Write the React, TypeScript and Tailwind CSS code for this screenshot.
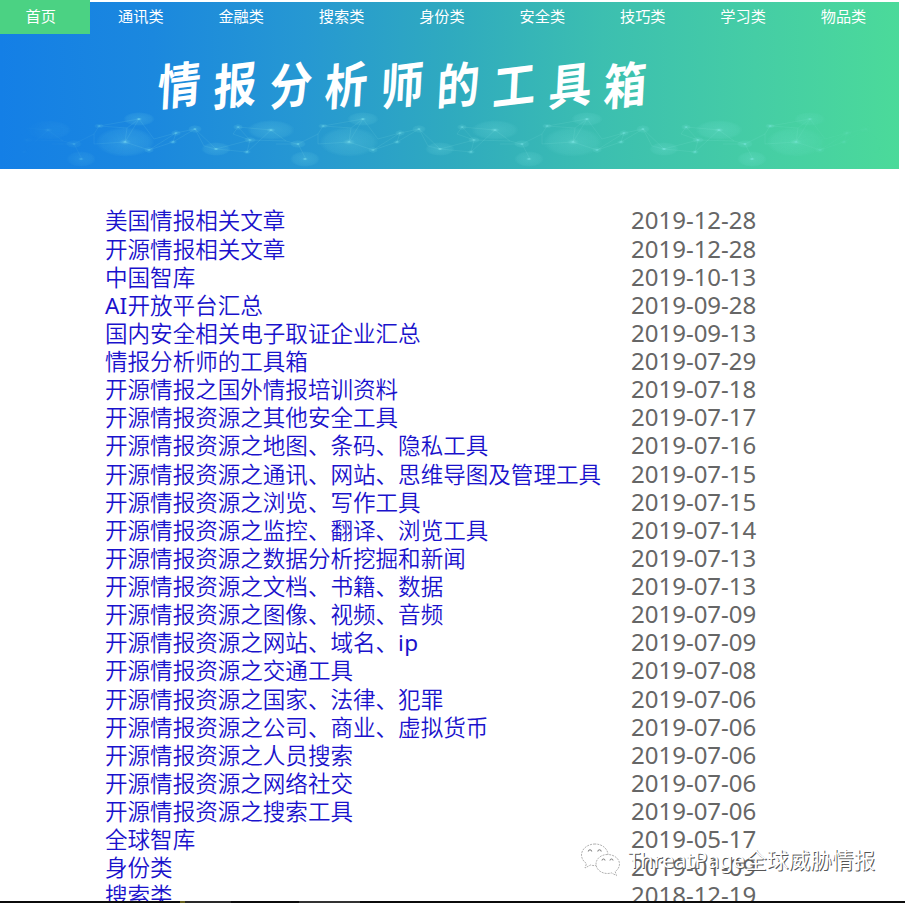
import React from 'react';

const navItems = ['通讯类', '金融类', '搜索类', '身份类', '安全类', '技巧类', '学习类', '物品类'];

const articles: [string, string][] = [
  ['美国情报相关文章', '2019-12-28'],
  ['开源情报相关文章', '2019-12-28'],
  ['中国智库', '2019-10-13'],
  ['AI开放平台汇总', '2019-09-28'],
  ['国内安全相关电子取证企业汇总', '2019-09-13'],
  ['情报分析师的工具箱', '2019-07-29'],
  ['开源情报之国外情报培训资料', '2019-07-18'],
  ['开源情报资源之其他安全工具', '2019-07-17'],
  ['开源情报资源之地图、条码、隐私工具', '2019-07-16'],
  ['开源情报资源之通讯、网站、思维导图及管理工具', '2019-07-15'],
  ['开源情报资源之浏览、写作工具', '2019-07-15'],
  ['开源情报资源之监控、翻译、浏览工具', '2019-07-14'],
  ['开源情报资源之数据分析挖掘和新闻', '2019-07-13'],
  ['开源情报资源之文档、书籍、数据', '2019-07-13'],
  ['开源情报资源之图像、视频、音频', '2019-07-09'],
  ['开源情报资源之网站、域名、ip', '2019-07-09'],
  ['开源情报资源之交通工具', '2019-07-08'],
  ['开源情报资源之国家、法律、犯罪', '2019-07-06'],
  ['开源情报资源之公司、商业、虚拟货币', '2019-07-06'],
  ['开源情报资源之人员搜索', '2019-07-06'],
  ['开源情报资源之网络社交', '2019-07-06'],
  ['开源情报资源之搜索工具', '2019-07-06'],
  ['全球智库', '2019-05-17'],
  ['身份类', '2019-01-09'],
  ['搜索类', '2018-12-19'],
];

// x, y, halo radius x, halo radius y
const nodes: [number, number, number, number][] = [
  [74, 144, 8, 4],
  [99, 126, 5, 2.5],
  [139, 119, 16, 7],
  [125, 142, 30, 15],
  [81, 159, 15, 8],
  [149, 150, 5, 3],
  [176, 133, 5, 3],
  [173, 142, 4, 2],
  [195, 129, 7, 4],
  [216, 149, 15, 7],
  [238, 127, 5, 3],
  [250, 140, 6, 3],
  [247, 152, 4, 2],
  [271, 130, 24, 10],
];

function NetworkPattern() {
  return (
    <svg className="absolute left-0 top-0" width="899" height="167" viewBox="0 2 899 167">
      <defs>
        <radialGradient id="halo">
          <stop offset="0" stopColor="#9ff6f4" stopOpacity="0.4" />
          <stop offset="0.2" stopColor="#8ff0ee" stopOpacity="0.16" />
          <stop offset="0.8" stopColor="#8ff0ee" stopOpacity="0.09" />
          <stop offset="1" stopColor="#8ff0ee" stopOpacity="0" />
        </radialGradient>
        <linearGradient id="edge">
          <stop offset="0.02" stopColor="#000" />
          <stop offset="0.14" stopColor="#fff" />
          <stop offset="0.86" stopColor="#fff" />
          <stop offset="0.98" stopColor="#000" />
        </linearGradient>
        <mask id="fade" maskUnits="userSpaceOnUse" x="0" y="0" width="899" height="170">
          <rect width="899" height="170" fill="url(#edge)" />
        </mask>
        <g id="tile">
          <path
            d="M52 144L74 144L94 134L99 126L127 128L139 119L125 142M74 144L82 159M94 134L94 144L125 142M99 126L139 119L154 139M127 128L125 142L149 150L176 133L154 139M149 150L173 142L195 129L176 133M195 129L204 146L216 149L250 140L238 127L271 130L286 141L250 140L247 152L216 149M238 127L233 134L250 140M271 130L247 152M286 141L297 144M195 129L216 149M173 142L176 133"
            fill="none"
            stroke="#a2f5ef"
            strokeOpacity="0.15"
            strokeWidth="0.7"
          />
          {nodes.map(([x, y, rx, ry]) => (
            <g key={`${x}-${y}`}>
              <ellipse cx={x} cy={y} rx={rx} ry={ry} fill="url(#halo)" />
              <ellipse cx={x} cy={y} rx="1.6" ry="1.1" fill="#8df4fa" fillOpacity="0.25" />
            </g>
          ))}
        </g>
      </defs>
      <g mask="url(#fade)">
        <use href="#tile" x="-223" />
        <use href="#tile" />
        <use href="#tile" x="224" />
        <use href="#tile" x="448" />
        <use href="#tile" x="671" />
      </g>
    </svg>
  );
}

function Watermark() {
  return (
    <div className="absolute left-[580px] top-[842px] flex h-9 items-center">
      <svg width="42" height="36" viewBox="0 0 42 36" fill="none" strokeLinejoin="round">
        <g fill="#fff" stroke="#a8a8a8" strokeWidth="0.9" strokeDasharray="2 1">
          <path d="M15 2C7.500 2 1.500 7 1.500 13c0 3.500 2 6.500 5 8.500L5 26l5.500-3c1.500.5 3 .6 4.500.6C22.500 23.600 28 19 28 13S22.500 2 15 2Z" />
          <path d="M27.500 12.500c-6.500 0-11.500 4.300-11.500 9.500s5 9.500 11.500 9.500c1.500 0 2.800-.2 4-.6l5 2.700-1.300-4c2.500-1.800 4.300-4.500 4.300-7.600 0-5.200-5.300-9.500-12-9.500Z" />
        </g>
        <g stroke="#777" strokeWidth="1">
          <path d="M8.300 9.500a1.700 1.700 0 0 1 3.400 0M17.800 9.500a1.700 1.700 0 0 1 3.400 0M22 18.500a1.500 1.500 0 0 1 3 0M30 18.500a1.500 1.500 0 0 1 3 0" />
        </g>
      </svg>
      <span className="ml-[6px] whitespace-nowrap font-['Noto_Sans','Noto_Sans_CJK_SC',sans-serif] text-[21.700px] leading-9 text-white [text-shadow:1px_1px_0_#555]">
        ThreatPage全球威胁情报
      </span>
    </div>
  );
}

export default function App() {
  return (
    <div className="relative flex h-[903px] w-[905px] flex-col overflow-hidden bg-white font-['Noto_Sans','Noto_Sans_CJK_SC',sans-serif]">
      <header className="relative mt-[2px] h-[167px] w-[899px] shrink-0 bg-[linear-gradient(90deg,#147fe6_0%,#1b88de_17%,#2698d2_34%,#2faabf_50%,#3cbfb0_67%,#45cda5_84%,#4bda9a_100%)]">
        <NetworkPattern />
        <nav className="relative -mt-[2px] flex h-[34px] text-[15.200px] leading-[33px] text-white">
          <a className="w-[90px] bg-[#4bd283] pl-[25.500px]">首页</a>
          <div className="flex">
            {navItems.map((item) => (
              <a key={item} className="w-[100.400px] pl-[28px]">
                {item}
              </a>
            ))}
          </div>
        </nav>
        <h1 className="relative ml-[158px] mt-[14px] flex whitespace-nowrap font-['Noto_Sans_CJK_SC',sans-serif] text-[43px] font-bold leading-[68px] text-white">
          {Array.from('情报分析师的工具箱').map((char) => (
            <span key={char} className="w-[55.800px]">
              <span className="inline-block [transform:skew(-3deg,-7deg)_scaleY(1.14)]">{char}</span>
            </span>
          ))}
        </h1>
      </header>

      <main className="pl-[105px] pt-[38.400px]">
        {articles.map(([title, date]) => (
          <div key={title} className="flex h-[28.130px] items-center whitespace-nowrap">
            <a className="w-[526px] text-[22.550px] font-[350] leading-[28px] text-[#1a12cc]">
              {title.split(/([A-Za-z]+)/).map((part, i) =>
                i % 2 ? (
                  <span key={i} className="font-normal tracking-[0.2px]">
                    {part}
                  </span>
                ) : (
                  part
                ),
              )}
            </a>
            <time className="-mt-[2px] text-[24px] leading-[28px] text-[#666]">{date}</time>
          </div>
        ))}
      </main>

      <Watermark />
      <div className="absolute bottom-0 left-0 flex h-[2px] w-full bg-[#0b0b0b]">
        <span className="ml-[180px] w-[5px] bg-[#66601c]" />
        <span className="w-[46px] bg-[#292929]" />
        <span className="ml-[68px] w-[61px] bg-[#333]" />
      </div>
    </div>
  );
}
